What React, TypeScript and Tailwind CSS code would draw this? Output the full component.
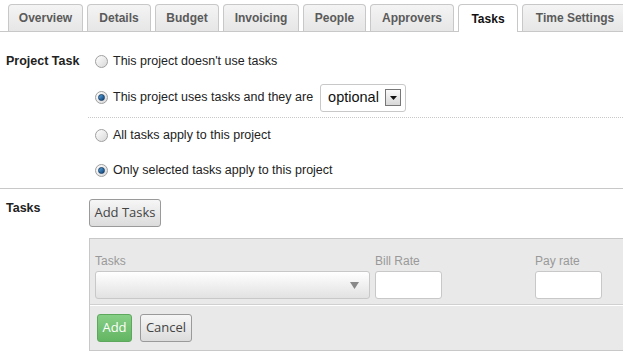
import React from "react";

const tabs = [
  { label: "Overview", w: "w-[75px]" },
  { label: "Details", w: "w-[64px]" },
  { label: "Budget", w: "w-[64px]" },
  { label: "Invoicing", w: "w-[76px]" },
  { label: "People", w: "w-[63px]" },
  { label: "Approvers", w: "w-[84px]" },
  { label: "Tasks", w: "w-[60px]" },
  { label: "Time Settings", w: "w-[106px]" },
];

const Radio = ({ checked }: { checked?: boolean }) => (
  <span className="relative inline-flex w-[13px] h-[13px] rounded-full border border-[#a0a0a0] bg-gradient-to-br from-[#ffffff] to-[#d8d8d8] items-center justify-center shrink-0">
    {checked && (
      <span className="w-[7px] h-[7px] rounded-full bg-gradient-to-br from-[#5aa9e0] to-[#0d3f78] border border-[#1a3f66]" />
    )}
  </span>
);

const Option = ({ checked, children }: { checked?: boolean; children: React.ReactNode }) => (
  <div className="flex items-center gap-[5px]">
    <Radio checked={checked} />
    <span className="text-[12.5px] text-[#222] whitespace-nowrap">{children}</span>
  </div>
);

const App = () => {
  return (
    <div className="w-[623px] h-[354px] overflow-hidden bg-white font-['Liberation_Sans',Arial,sans-serif]">
      {/* Tabs */}
      <div className="flex items-end gap-[4px] pl-[8px] pt-[4px] border-b border-[#c8c8c8] h-[32px]">
        {tabs.map((t) => {
          const active = t.label === "Tasks";
          return (
            <div
              key={t.label}
              className={
                active
                  ? `${t.w} h-[28px] -mb-px shrink-0 whitespace-nowrap flex items-center justify-center border border-b-0 border-[#c8c8c8] rounded-t-[4px] bg-white text-[12px] font-bold text-[#111]`
                  : `${t.w} h-[27px] shrink-0 whitespace-nowrap flex items-center justify-center border border-b-0 border-[#c8c8c8] rounded-t-[4px] bg-gradient-to-b from-[#f4f4f4] to-[#e6e6e6] text-[12px] font-bold text-[#5a5a5a]`
              }
            >
              {t.label}
            </div>
          );
        })}
      </div>

      {/* Project Task */}
      <div className="flex border-b border-[#c8c8c8]">
        <div className="w-[95px] shrink-0 pl-[6px] pt-[16px]">
          <span className="text-[12.5px] font-bold text-[#222] whitespace-nowrap">Project Task</span>
        </div>
        <div className="flex-1">
          <div className="h-[46px] pt-[12px] flex items-center">
            <Option>This project doesn't use tasks</Option>
          </div>
          <div className="h-[40px] flex items-center border-b border-dotted border-[#c8c8c8] -ml-[7px] pl-[7px]">
            <Option checked>This project uses tasks and they are</Option>
            <div className="ml-[7px] w-[86px] h-[28px] border border-[#c8c8c8] rounded-[3px] bg-white flex items-center pl-[7px] pr-[4px] justify-between">
              <span className="text-[14.5px] text-[#111]">optional</span>
              <span className="w-[16px] h-[17px] border border-[#777] bg-gradient-to-b from-[#fafafa] to-[#d8d8d8] flex items-center justify-center">
                <svg width="7" height="4" viewBox="0 0 7 4">
                  <path d="M0 0h7L3.5 4z" fill="#111" />
                </svg>
              </span>
            </div>
          </div>
          <div className="h-[35px] flex items-center">
            <Option>All tasks apply to this project</Option>
          </div>
          <div className="h-[35px] flex items-center">
            <Option checked>Only selected tasks apply to this project</Option>
          </div>
        </div>
      </div>

      {/* Tasks */}
      <div className="flex">
        <div className="w-[89px] shrink-0 pl-[6px] pt-[6px]">
          <span className="text-[12.5px] font-bold text-[#222]">Tasks</span>
        </div>
        <div className="flex-1 pt-[10px]">
          <button className="h-[28px] w-[72px] border border-[#9a9a9a] rounded-[3px] bg-gradient-to-b from-[#f6f6f6] to-[#dcdcdc] text-[13px] text-[#444] font-['Open_Sans',sans-serif]">
            Add Tasks
          </button>
          <div className="mt-[11px] border border-r-0 border-[#c8c8c8] bg-[#e9e9e9]">
            <div className="flex px-[5px] pt-[14px] pb-[5px] border-b border-[#d0d0d0]">
              <div className="w-[275px] flex flex-col">
                <span className="text-[12px] text-[#999] leading-[16px] mb-[2px]">Tasks</span>
                <div className="h-[28px] border border-[#c8c8c8] rounded-[3px] bg-gradient-to-b from-[#ffffff] via-[#f0f0f0] to-[#e2e2e2] flex items-center justify-end pr-[10px]">
                  <svg width="9" height="7" viewBox="0 0 9 7">
                    <path d="M0 0h9L4.5 7z" fill="#888" />
                  </svg>
                </div>
              </div>
              <div className="ml-[5px] w-[67px] flex flex-col">
                <span className="text-[12px] text-[#999] leading-[16px] mb-[2px]">Bill Rate</span>
                <div className="h-[28px] border border-[#c8c8c8] rounded-[3px] bg-white" />
              </div>
              <div className="ml-[93px] w-[67px] flex flex-col">
                <span className="text-[12px] text-[#999] leading-[16px] mb-[2px]">Pay rate</span>
                <div className="h-[28px] border border-[#c8c8c8] rounded-[3px] bg-white" />
              </div>
            </div>
            <div className="flex gap-[8px] pl-[7px] pt-[8px] pb-[8px] border-t border-white font-['Open_Sans',sans-serif]">
              <button className="h-[28px] w-[35px] border border-[#5ea85e] rounded-[3px] bg-gradient-to-b from-[#86cf86] to-[#63b563] text-[13px] text-white">
                Add
              </button>
              <button className="h-[28px] w-[52px] border border-[#9a9a9a] rounded-[3px] bg-gradient-to-b from-[#f6f6f6] to-[#dcdcdc] text-[13px] text-[#444]">
                Cancel
              </button>
            </div>
          </div>
        </div>
      </div>
    </div>
  );
};

export default App;
